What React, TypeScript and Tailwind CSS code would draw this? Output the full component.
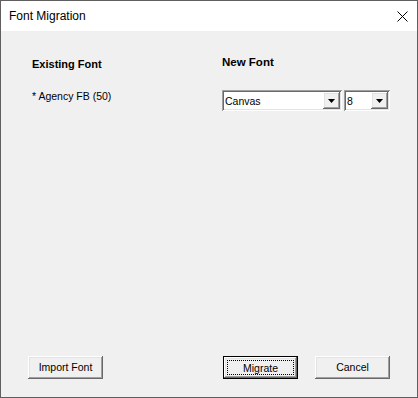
import * as React from "react";

const raised =
  "shadow-[inset_-1px_-1px_0_#696969,inset_1px_1px_0_#ffffff,inset_-2px_-2px_0_#a0a0a0,inset_2px_2px_0_#e3e3e3]";

function DropArrow() {
  return (
    <span className={`flex h-full w-[17px] shrink-0 items-center justify-center bg-[#f0f0f0] ${raised}`}>
      <svg width="7" height="4" viewBox="0 0 7 4" aria-hidden>
        <polygon points="0,0 7,0 3.5,4" fill="#000" />
      </svg>
    </span>
  );
}

function Combo({ value, width }: { value: string; width: string }) {
  return (
    <div
      className={`flex h-[21px] ${width} bg-white p-[2px] shadow-[inset_1px_1px_0_#a0a0a0,inset_-1px_-1px_0_#ffffff,inset_2px_2px_0_#696969,inset_-2px_-2px_0_#e3e3e3]`}
    >
      <span className="flex-1 self-center truncate pl-[1px] pt-[1px] text-[10.5px] leading-[14px]">{value}</span>
      <DropArrow />
    </div>
  );
}

function Button({ label, isDefault }: { label: string; isDefault?: boolean }) {
  if (isDefault) {
    return (
      <button
        type="button"
        className="flex h-[23px] w-[75px] border border-black bg-[#f0f0f0] p-0"
      >
        <span className={`flex flex-1 p-[3px] ${raised}`}>
          <span className="flex flex-1 items-center justify-center border border-dotted border-black text-[10.5px] leading-[14px]">
            {label}
          </span>
        </span>
      </button>
    );
  }
  return (
    <button
      type="button"
      className={`flex h-[23px] w-[75px] items-center justify-center bg-[#f0f0f0] pb-[1px] text-[10.5px] leading-[14px] ${raised}`}
    >
      {label}
    </button>
  );
}

export default function App() {
  return (
    <div className="flex h-[398px] w-[418px] flex-col border border-[#5f5f5f] bg-white font-['Liberation_Sans',Arial,sans-serif] text-black">
      <div className="flex h-[30px] shrink-0 items-center justify-between bg-white pl-[8px] pr-[9px]">
        <span className="text-[12px] leading-[16px]">Font Migration</span>
        <svg width="11" height="11" viewBox="0 0 11 11" aria-hidden>
          <path d="M0.5 0.5 L10.5 10.5 M10.5 0.5 L0.5 10.5" stroke="#000" strokeWidth="1" />
        </svg>
      </div>

      <div className="flex flex-1 flex-col bg-[#f0f0f0]">
        <div className="flex">
          <div className="flex w-[221px] flex-col pl-[31px] pt-[26px]">
            <p className="text-[11px] font-bold leading-[14px]">Existing Font</p>
            <p className="mt-[18px] text-[10.5px] leading-[14px]">* Agency FB (50)</p>
          </div>
          <div className="flex flex-col pt-[24px]">
            <p className="text-[11.5px] font-bold leading-[14px]">New Font</p>
            <div className="mt-[21px] flex gap-[2px]">
              <Combo value="Canvas" width="w-[120px]" />
              <Combo value="8" width="w-[46px]" />
            </div>
          </div>
        </div>

        <div className="mt-auto flex items-center justify-between pb-[18px] pl-[27px] pr-[27px]">
          <Button label="Import Font" />
          <div className="flex gap-[17px]">
            <Button label="Migrate" isDefault />
            <Button label="Cancel" />
          </div>
        </div>
      </div>
    </div>
  );
}
